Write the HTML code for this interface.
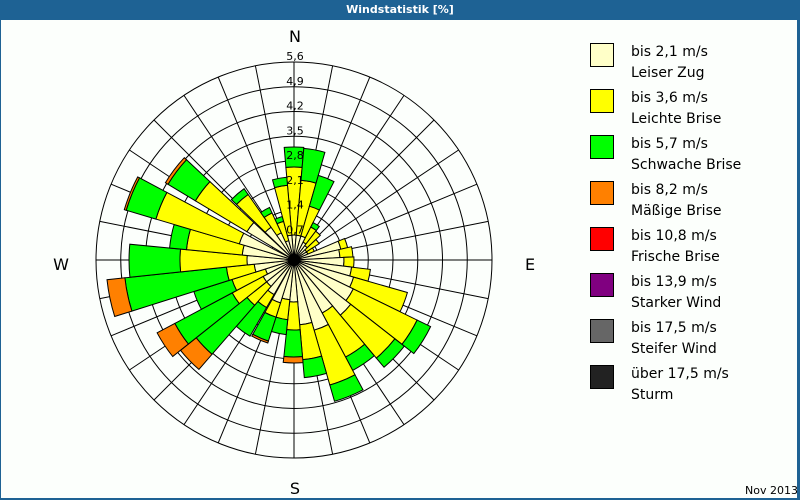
<!DOCTYPE html>
<html><head><meta charset="utf-8"><style>
html,body{margin:0;padding:0;}
body{width:800px;height:500px;overflow:hidden;background:#fcfffc;font-family:"DejaVu Sans","Liberation Sans",sans-serif;}
#frame{position:absolute;left:0;top:0;width:796px;height:498px;border-left:1px solid #1e6294;border-right:3px solid #1e6294;border-bottom:2px solid #1e6294;}
#hdr{position:absolute;left:0;top:0;width:800px;height:20px;background:#1e6294;color:#fff;font-weight:bold;font-size:11px;text-align:center;line-height:20px;}
svg{position:absolute;left:0;top:0;}
.lg{position:absolute;left:631px;font-size:14px;line-height:21px;color:#000;}
.sq{position:absolute;left:590px;width:22px;height:22px;border:1px solid #000;}
</style></head><body>
<div id="frame"></div>
<div id="hdr">Windstatistik [%]</div>
<svg id="s" width="800" height="500" xmlns="http://www.w3.org/2000/svg"></svg>
<div class="sq" style="top:43px;background:#ffffc8"></div><div class="lg" style="top:42px">bis 2,1 m/s<br>Leiser Zug</div>
<div class="sq" style="top:89px;background:#ffff00"></div><div class="lg" style="top:88px">bis 3,6 m/s<br>Leichte Brise</div>
<div class="sq" style="top:135px;background:#00ff00"></div><div class="lg" style="top:134px">bis 5,7 m/s<br>Schwache Brise</div>
<div class="sq" style="top:181px;background:#ff8000"></div><div class="lg" style="top:180px">bis 8,2 m/s<br>Mäßige Brise</div>
<div class="sq" style="top:227px;background:#ff0000"></div><div class="lg" style="top:226px">bis 10,8 m/s<br>Frische Brise</div>
<div class="sq" style="top:273px;background:#800080"></div><div class="lg" style="top:272px">bis 13,9 m/s<br>Starker Wind</div>
<div class="sq" style="top:319px;background:#666666"></div><div class="lg" style="top:318px">bis 17,5 m/s<br>Steifer Wind</div>
<div class="sq" style="top:365px;background:#222222"></div><div class="lg" style="top:364px">über 17,5 m/s<br>Sturm</div>
<div style="position:absolute;left:745px;top:484px;font-size:11px;">Nov 2013</div>
<script>
var s=document.getElementById('s');
var cx=294,cy=260,h='';
var cols=['#ffffc8','#ffff00','#00ff00','#ff8000'];
function pt(a,r){var t=a*Math.PI/180;return (cx+r*Math.sin(t)).toFixed(1)+','+(cy-r*Math.cos(t)).toFixed(1);}
var D=[[0,[25,93,113]],[10,[25,80,112]],[22,[25,56,88]],[32,[20,37,42]],[42,[18,36]],[52,[15,30]],[62,[15,22]],[72,[48,55]],[82,[46,59]],[92,[50,60]],[102,[58,77]],[110,[62,118]],[122,[66,137,152]],[134,[72,128,140]],[146,[60,110,125]],[158,[73,130,147]],[170,[65,100,118]],[180,[42,70,97,103]],[192,[40,60,75]],[203,[45,60,85,87]],[216,[40,55,88]],[226,[35,60,125,145]],[237,[35,70,135,155]],[247,[30,65,105]],[258,[40,68,170,188]],[270,[47,114,165]],[281,[52,108,125]],[292,[57,144,175,177]],[307,[55,115,147,150]],[320,[40,80,87]],[330,[30,52,58]],[340,[20,40,45]],[350,[25,75,83]]];
var R=24.75;
for(var k=1;k<=8;k++)h+='<circle cx="'+cx+'" cy="'+cy+'" r="'+(R*k)+'" fill="none" stroke="#000" stroke-width="1"/>';
for(var i=0;i<32;i++){var a=i*11.25,e=pt(a,198).split(',');h+='<line x1="'+cx+'" y1="'+cy+'" x2="'+e[0]+'" y2="'+e[1]+'" stroke="#000" stroke-width="1"/>';}
var n=D.length;
D.forEach(function(d,idx){var a=d[0],r=d[1],prev=0;
 var pa=D[(idx+n-1)%n][0],na=D[(idx+1)%n][0];
 var gp=(a-pa+360)%360,gn=(na-a+360)%360;
 var a1=a-Math.min(gp/2,6),a2=a+Math.min(gn/2,6);
 for(var j=0;j<r.length;j++){var r0=prev,r1=r[j];
  var p='M'+pt(a1,r0)+' L'+pt(a1,r1)+' A'+r1+','+r1+' 0 0 1 '+pt(a2,r1)+' L'+pt(a2,r0)+(r0>0?' A'+r0+','+r0+' 0 0 0 '+pt(a1,r0):'')+' Z';
  h+='<path d="'+p+'" fill="'+cols[j]+'" stroke="#000" stroke-width="1"/>';prev=r1;}
});
h+='<circle cx="'+cx+'" cy="'+cy+'" r="6" fill="#000"/>';
var L=['0,7','1,4','2,1','2,8','3,5','4,2','4,9','5,6'];
for(var k=1;k<=8;k++)h+='<text x="'+(cx+1)+'" y="'+(cy-R*k-2)+'" font-size="11" text-anchor="middle" font-family="DejaVu Sans,Liberation Sans,sans-serif">'+L[k-1]+'</text>';
h+='<g font-size="16" font-family="DejaVu Sans,Liberation Sans,sans-serif" text-anchor="middle"><text x="295" y="42">N</text><text x="61" y="270">W</text><text x="530" y="270">E</text><text x="295" y="494">S</text></g>';
s.innerHTML=h;
</script>
</body></html>
